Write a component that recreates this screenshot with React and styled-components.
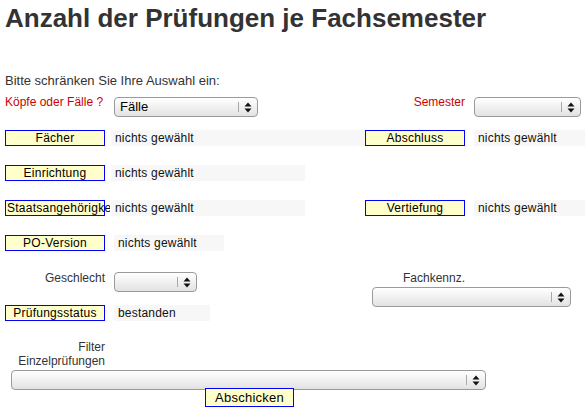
import React from 'react';
import styled, { createGlobalStyle } from 'styled-components';

const GlobalStyle = createGlobalStyle`
    body {
        margin: 0;
        background: #fff;
        font-family: "Liberation Sans", Arial, sans-serif;
        font-size: 12px;
        color: #333;
    }
`;

const Title = styled.h1`
    margin: 0;
    padding: 3px 5px 0;
    font-size: 26px;
    line-height: 30px;
    font-weight: bold;
    color: #333;
    white-space: nowrap;
`;

const Intro = styled.p`
    margin: 40px 0 0;
    padding-left: 5px;
    font-size: 13px;
    line-height: 15px;
`;

const Row = styled.div`
    display: grid;
    grid-template-columns: 110px 255px 109px 111px;
    grid-template-rows: ${({ $rows }) => $rows || 'auto'};
    row-gap: 13px;
    align-items: start;
    margin-top: ${({ $top }) => $top}px;
`;

const Cell = styled.div`
    display: flex;
    flex-direction: column;
    align-items: ${({ $end }) => ($end ? 'flex-end' : 'flex-start')};
    overflow: hidden;
    min-width: 0;
    grid-column: ${({ $span }) => $span || 'auto'};
    grid-row: ${({ $rowSpan }) => $rowSpan || 'auto'};
`;

const Label = styled.span`
    display: block;
    box-sizing: border-box;
    width: ${({ $w }) => ($w ? `${$w}px` : 'auto')};
    line-height: 14px;
    color: ${({ $red }) => ($red ? '#cc0000' : '#333')};
    text-align: ${({ $right }) => ($right ? 'right' : 'left')};
    padding: ${({ $right, $pr }) => ($right ? `0 ${$pr || 5}px 0 0` : '0 0 0 5px')};
    white-space: nowrap;
`;

const Btn = styled.button`
    display: block;
    box-sizing: border-box;
    width: ${({ $w }) => $w || 100}px;
    height: ${({ $h }) => $h || 16}px;
    margin: 0 0 0 ${({ $ml }) => ($ml === undefined ? 5 : $ml)}px;
    padding: 0 1px;
    border: 1px solid #0000ff;
    background: #ffffcc;
    color: #000;
    font-family: "Liberation Sans", Arial, sans-serif;
    font-size: ${({ $fs }) => $fs || 12}px;
    letter-spacing: 0.25px;
    line-height: ${({ $h }) => ($h || 16) - 2}px;
    text-align: center;
    white-space: nowrap;
    overflow: visible;
    cursor: pointer;
`;

const Value = styled.div`
    box-sizing: border-box;
    width: ${({ $w }) => $w}px;
    height: 16px;
    margin-left: ${({ $ml }) => $ml || 0}px;
    padding-left: 4px;
    background: #f7f7f7;
    color: #111;
    letter-spacing: 0.2px;
    line-height: 16px;
    white-space: nowrap;
`;

const SelectBox = styled.div`
    box-sizing: border-box;
    display: flex;
    align-items: center;
    width: ${({ $w }) => $w}px;
    height: 20px;
    margin-left: ${({ $ml }) => $ml || 0}px;
    margin-top: ${({ $top }) => $top || 0}px;
    border: 1px solid #9a9a9a;
    border-radius: 4px;
    background: linear-gradient(to bottom, #ffffff 0%, #f1f1f1 50%, #e2e2e2 100%);
`;

const SelectText = styled.span`
    flex: 1;
    padding-left: 5px;
    color: #000;
    font-size: 13px;
    line-height: 18px;
    white-space: nowrap;
    overflow: hidden;
`;

const Separator = styled.span`
    width: 1px;
    height: 10px;
    background: #a8a8a8;
    margin-right: 5px;
`;

const Arrows = () => (
    <svg width="8" height="11" viewBox="0 0 8 11" style={{ marginRight: 5 }}>
        <polygon points="0.5,4.5 4,0.5 7.5,4.5" fill="#111" />
        <polygon points="0.5,6.5 4,10.5 7.5,6.5" fill="#111" />
    </svg>
);

const Select = ({ w, ml, top, children }) => (
    <SelectBox $w={w} $ml={ml} $top={top}>
        <SelectText>{children}</SelectText>
        <Separator />
        <Arrows />
    </SelectBox>
);

const SubmitRow = styled.div`
    margin-top: -2px;
`;

const App = () => (
    <>
        <GlobalStyle />
        <Title>Anzahl der Prüfungen je Fachsemester</Title>
        <Intro>Bitte schränken Sie Ihre Auswahl ein:</Intro>

        <Row $top={7}>
            <Cell><Label $red>Köpfe oder Fälle ?</Label></Cell>
            <Cell><Select w={144} ml={4} top={2}>Fälle</Select></Cell>
            <Cell $end><Label $red $right $pr={9}>Semester</Label></Cell>
            <Cell><Select w={107} top={2} /></Cell>
        </Row>

        <Row $top={13}>
            <Cell><Btn>Fächer</Btn></Cell>
            <Cell><Value $w={254} $ml={1}>nichts gewählt</Value></Cell>
            <Cell><Btn $ml={0}>Abschluss</Btn></Cell>
            <Cell><Value $w={111}>nichts gewählt</Value></Cell>
        </Row>

        <Row $top={19}>
            <Cell><Btn>Einrichtung</Btn></Cell>
            <Cell><Value $w={194} $ml={1}>nichts gewählt</Value></Cell>
        </Row>

        <Row $top={19}>
            <Cell><Btn>Staatsangehörigkeit</Btn></Cell>
            <Cell><Value $w={194} $ml={1}>nichts gewählt</Value></Cell>
            <Cell><Btn $ml={0}>Vertiefung</Btn></Cell>
            <Cell><Value $w={111}>nichts gewählt</Value></Cell>
        </Row>

        <Row $top={19}>
            <Cell><Btn>PO-Version</Btn></Cell>
            <Cell><Value $w={110} $ml={4}>nichts gewählt</Value></Cell>
        </Row>

        <Row $top={20} $rows="21px 16px">
            <Cell $end><Label $right>Geschlecht</Label></Cell>
            <Cell><Select w={83} ml={4} top={1} /></Cell>
            <Cell $span="3 / span 2" $rowSpan="1 / span 2">
                <Label $right $w={105}>Fachkennz.</Label>
                <Select w={199} ml={7} top={2} />
            </Cell>
            <Cell><Btn>Prüfungsstatus</Btn></Cell>
            <Cell><Value $w={96} $ml={4}>bestanden</Value></Cell>
        </Row>

        <Row $top={19}>
            <Cell $end>
                <Label $right>Filter</Label>
                <Label $right>Einzelprüfungen</Label>
            </Cell>
        </Row>

        <Select w={475} ml={11} top={2} />

        <SubmitRow>
            <Btn $ml={205} $w={89} $h={19} $fs={13}>Abschicken</Btn>
        </SubmitRow>
    </>
);

export default App;
